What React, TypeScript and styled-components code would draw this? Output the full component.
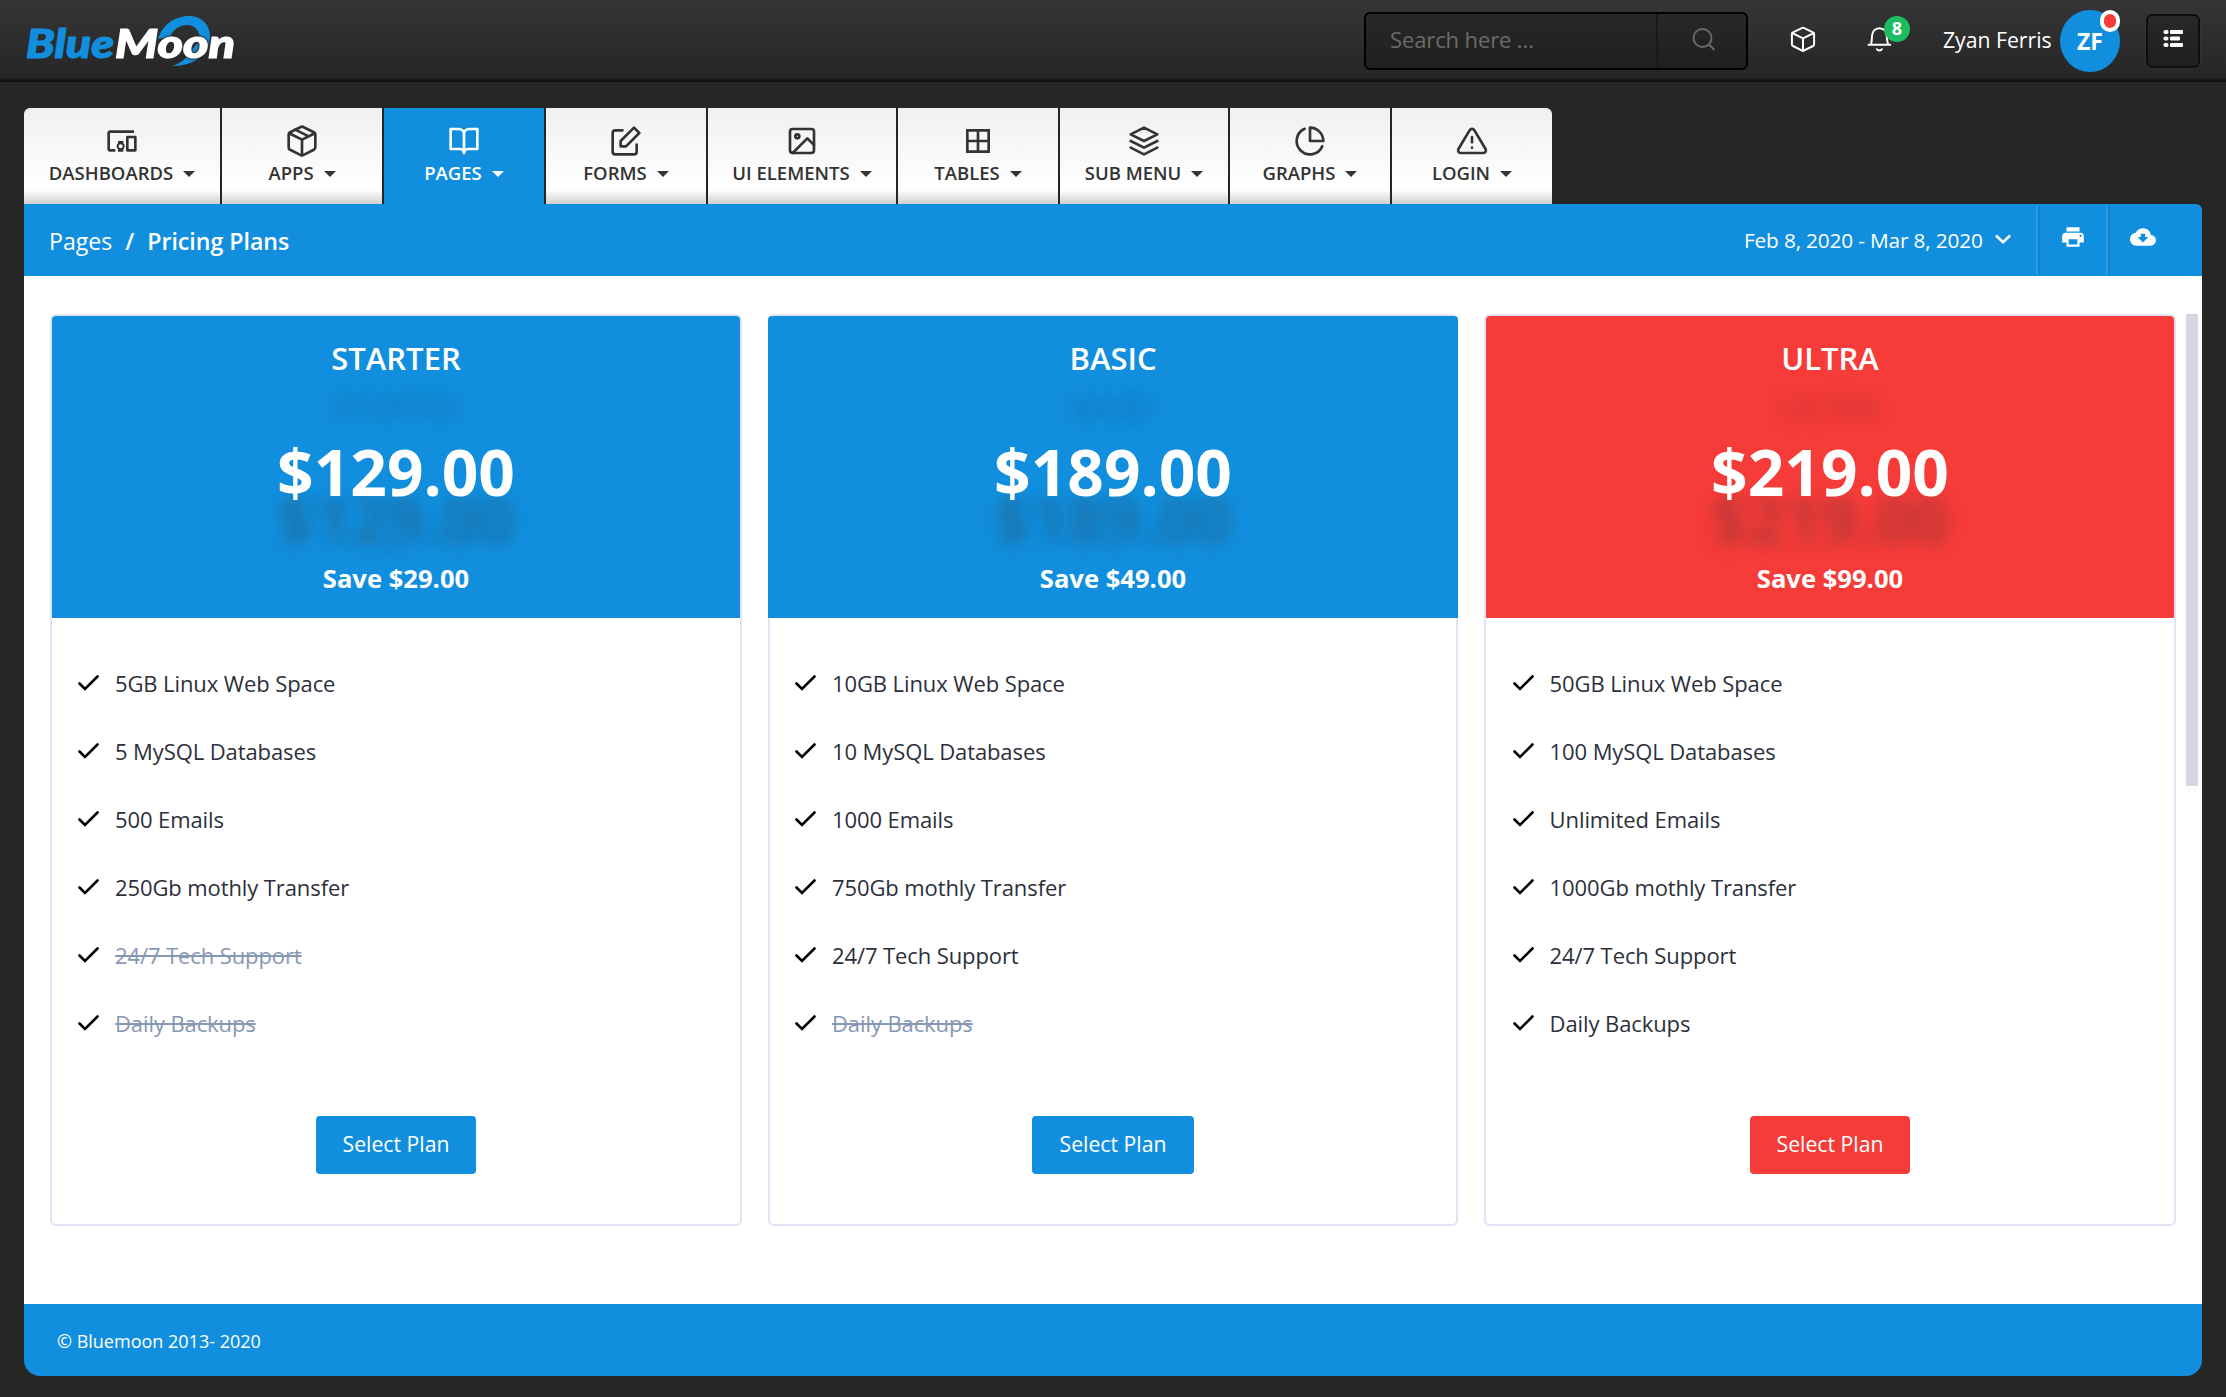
import React from "react";
import styled, { createGlobalStyle } from "styled-components";

const BLUE = "#118fde";
const RED = "#f63c39";
const DARK = "#262624";
const INK = "#333333";

const GlobalStyle = createGlobalStyle`
  *, *::before, *::after { box-sizing: border-box; }
  body {
    margin: 0;
    background: ${DARK};
    font-family: "Open Sans", "Noto Sans", sans-serif;
    -webkit-font-smoothing: antialiased;
  }
`;

const Page = styled.div`
  display: flex;
  flex-direction: column;
  height: 1397px;
  background: ${DARK};
`;

const Header = styled.header`
  display: flex;
  align-items: flex-start;
  justify-content: space-between;
  height: 82px;
  padding: 0 26px 0 24px;
  background: linear-gradient(#353535, #262626 78px, #131311 80px, #0e0e0c);
`;

const LogoArt = styled.svg`
  display: block;
  width: 216px;
  height: 80px;
`;

const LogoText = styled.text`
  font-family: Lato, "Open Sans", sans-serif;
  font-weight: 900;
  font-style: italic;
  font-size: 40px;
  stroke: currentColor;
  stroke-width: 1.2px;
  fill: currentColor;
`;

const LogoHalo = styled.g`
  filter: drop-shadow(0 0 0.8px #2b2b2b) drop-shadow(0 0 0.8px #2b2b2b);
`;

const HeaderTools = styled.div`
  display: flex;
  align-items: flex-start;
`;

const SearchBox = styled.div`
  display: flex;
  width: 384px;
  height: 58px;
  margin-top: 12px;
  border: 2px solid #000;
  border-radius: 6px;
  background: linear-gradient(#282826, #1f1f1f);
`;

const SearchField = styled.div`
  flex: 1;
  padding-left: 24px;
  border-right: 2px solid #1a1a19;
  font-size: 22px;
  line-height: 51px;
  letter-spacing: -0.12px;
  color: #6b6b6b;
`;

const SearchButton = styled.div`
  display: flex;
  align-items: center;
  justify-content: center;
  width: 88px;
  padding: 0 0 2px 3px;
`;

const HeaderIcon = styled.div<{ $left: number }>`
  position: relative;
  width: 28px;
  height: 28px;
  margin: 25px 0 0 ${(p) => p.$left}px;
  svg { display: block; }
`;

const CountBadge = styled.span`
  position: absolute;
  top: -9px;
  left: 19px;
  width: 26px;
  height: 26px;
  border-radius: 50%;
  background: #1bbd60;
  color: #fff;
  font-size: 18px;
  font-weight: 700;
  line-height: 24px;
  text-align: center;
`;

const UserName = styled.span`
  margin: 24px 0 0 50px;
  width: 109px;
  font-size: 21.2px;
  line-height: 32px;
  white-space: nowrap;
  color: #fff;
`;

const Avatar = styled.div`
  position: relative;
  width: 60px;
  height: 62px;
  margin: 10px 0 0 8px;
  border-radius: 50%;
  background: ${BLUE};
  color: #fff;
  font-size: 23px;
  font-weight: 700;
  line-height: 63px;
  text-align: center;
`;

const StatusDot = styled.span`
  position: absolute;
  top: 0;
  right: 0;
  width: 20px;
  height: 22px;
  border: 4px solid #fff;
  border-radius: 10px;
  background: ${RED};
`;

const MenuButton = styled.div`
  display: flex;
  justify-content: center;
  width: 54px;
  height: 54px;
  margin: 14px 0 0 26px;
  padding-top: 13px;
  border: 2px solid #0e0e0e;
  border-radius: 6px;
  background: linear-gradient(#282826, #1f1f1f);
  box-shadow: 0 0 2px #484848;
`;

const Tabs = styled.nav`
  display: flex;
  gap: 2px;
  align-self: flex-start;
  height: 96px;
  margin: 26px 0 0 24px;
  border-radius: 6px 6px 0 0;
  overflow: hidden;
`;

const Tab = styled.div<{ $width: number; $active?: boolean }>`
  display: flex;
  flex-direction: column;
  align-items: center;
  width: ${(p) => p.$width}px;
  padding-top: 17px;
  color: ${(p) => (p.$active ? "#fff" : INK)};
  background: ${(p) =>
    p.$active
      ? BLUE
      : "linear-gradient(rgba(0,0,0,0), rgba(0,0,0,0.19)) bottom / 100% 14px no-repeat, linear-gradient(#f0f0f0, #ffffff 78px)"};
`;

const TabLabel = styled.span`
  display: flex;
  align-items: center;
  gap: 10px;
  height: 30px;
  font-size: 18.5px;
  font-weight: 600;
  white-space: nowrap;
`;

const Caret = styled.i`
  margin-top: 4px;
  border: 6px solid transparent;
  border-bottom: 0;
  border-top-color: currentColor;
`;

const Toolbar = styled.div`
  display: flex;
  justify-content: space-between;
  height: 72px;
  margin: 0 24px;
  padding-left: 25px;
  border-radius: 0 6px 0 0;
  background: ${BLUE};
  color: #fff;
`;

const Breadcrumb = styled.div`
  display: flex;
  gap: 13px;
  font-size: 23.1px;
  line-height: 75px;
  b { font-weight: 600; }
`;

const ToolbarActions = styled.div`
  display: flex;
  align-items: stretch;
  padding: 2px 0;
`;

const DateRange = styled.div`
  display: flex;
  align-items: center;
  gap: 12px;
  width: 292px;
  padding-bottom: 1px;
  font-size: 20.8px;
  letter-spacing: -0.16px;
  white-space: nowrap;
`;

const ToolbarButton = styled.div<{ $width: number; $shift: number }>`
  display: flex;
  align-items: center;
  justify-content: center;
  width: ${(p) => p.$width}px;
  padding: 0 ${(p) => p.$shift}px 6px 2px;
  border-left: 2px solid #2c9ce5;
  box-shadow: inset 2px 0 #0f80c9;
`;

const Content = styled.main`
  display: flex;
  align-items: flex-start;
  height: 1028px;
  margin: 0 24px;
  padding: 38px 4px 0 26px;
  background: #fff;
`;

const Plans = styled.div`
  display: grid;
  grid-template-columns: 692px 690px 692px;
  gap: 26px;
  flex: 1;
`;

const ScrollThumb = styled.div`
  width: 12px;
  height: 472px;
  margin-left: 10px;
  background: #d4d7e0;
`;

const Card = styled.section`
  display: flex;
  flex-direction: column;
  height: 912px;
  border: 2px solid #e2e2f4;
  border-radius: 6px;
  background: #fff;
`;

const CardHead = styled.div<{ $color: string; $bleed: number }>`
  height: 302px;
  margin: 0 -${(p) => p.$bleed}px;
  padding-top: 19px;
  border-radius: 4px 4px 0 0;
  background: ${(p) => p.$color};
  color: #fff;
  text-align: center;
`;

const PlanName = styled.div`
  font-size: 31px;
  font-weight: 600;
  line-height: 46px;
  text-shadow: 0 49px 16px rgba(50, 50, 50, 0.22);
`;

const Price = styled.div`
  margin-top: 46px;
  font-size: 64px;
  font-weight: 700;
  line-height: 90px;
  text-shadow: 0 48px 16px rgba(50, 50, 50, 0.3);
`;

const Saving = styled.div`
  margin-top: 43px;
  font-size: 25.6px;
  font-weight: 700;
  line-height: 38px;
`;

const Features = styled.ul<{ $indent: number }>`
  display: flex;
  flex-direction: column;
  margin: 32px 0 0;
  padding: 0 0 0 ${(p) => p.$indent}px;
  list-style: none;
`;

const Feature = styled.li`
  display: flex;
  align-items: center;
  gap: 16px;
  height: 68px;
  padding-bottom: 2px;
  font-size: 22px;
  letter-spacing: -0.1px;
`;

const FeatureText = styled.span<{ $off: boolean }>`
  color: ${(p) => (p.$off ? "#8798b4" : "#2c303b")};
  text-decoration: ${(p) => (p.$off ? "line-through 2px" : "none")};
`;

const SelectButton = styled.button<{ $color: string; $width: number }>`
  align-self: center;
  width: ${(p) => p.$width}px;
  height: 58px;
  margin-top: 58px;
  padding: 0 0 3px;
  border: 0;
  border-radius: 4px;
  background: ${(p) => p.$color};
  color: #fff;
  font-family: inherit;
  font-size: 21.2px;
`;

const Footer = styled.footer`
  height: 72px;
  margin: 0 24px;
  padding-left: 33px;
  border-radius: 0 0 16px 16px;
  background: ${BLUE};
  color: #fff;
  font-size: 18px;
  line-height: 74px;
`;

const Line = ({ children }: { children: React.ReactNode }) => (
  <svg width="32" height="32" viewBox="0 0 24 24" fill="none" stroke="currentColor" strokeWidth="2" strokeLinecap="round" strokeLinejoin="round">
    {children}
  </svg>
);

const Solid = ({ d, size = 32 }: { d: string; size?: number }) => (
  <svg width={size} height={size} viewBox="0 0 24 24" fill="currentColor">
    <path d={d} />
  </svg>
);

const tabs: { label: string; width: number; active?: boolean; icon: React.ReactNode }[] = [
  {
    label: "DASHBOARDS",
    width: 196,
    icon: (
      <Solid d="M3 6h18V4H3c-1.1 0-2 .9-2 2v12c0 1.1.9 2 2 2h4v-2H3V6zm10 6H9v1.78c-.61.55-1 1.33-1 2.22s.39 1.67 1 2.22V20h4v-1.78c.61-.55 1-1.34 1-2.22s-.39-1.67-1-2.22V12zm-2 5.5c-.83 0-1.5-.67-1.5-1.5s.67-1.5 1.5-1.5 1.5.67 1.5 1.5-.67 1.5-1.5 1.5zM22 8h-6c-.5 0-1 .5-1 1v10c0 .5.5 1 1 1h6c.5 0 1-.5 1-1V9c0-.5-.5-1-1-1zm-1 10h-4v-8h4v8z" />
    ),
  },
  {
    label: "APPS",
    width: 160,
    icon: (
      <Line>
        <path d="M12.89 1.45l8 4A2 2 0 0 1 22 7.24v9.53a2 2 0 0 1-1.11 1.79l-8 4a2 2 0 0 1-1.79 0l-8-4a2 2 0 0 1-1.1-1.8V7.24a2 2 0 0 1 1.11-1.79l8-4a2 2 0 0 1 1.78 0z" />
        <path d="M2.32 6.16L12 11l9.68-4.84M12 22.76V11M7 3.5l10 5" />
      </Line>
    ),
  },
  {
    label: "PAGES",
    width: 160,
    active: true,
    icon: <Line><path d="M2 3h6a4 4 0 0 1 4 4v14a3 3 0 0 0-3-3H2zM22 3h-6a4 4 0 0 0-4 4v14a3 3 0 0 1 3-3h7z" /></Line>,
  },
  {
    label: "FORMS",
    width: 160,
    icon: <Line><path d="M20 14.66V20a2 2 0 0 1-2 2H4a2 2 0 0 1-2-2V6a2 2 0 0 1 2-2h5.34" /><path d="M18 2l4 4-10 10H8v-4L18 2z" /></Line>,
  },
  {
    label: "UI ELEMENTS",
    width: 188,
    icon: <Line><rect x="3" y="3" width="18" height="18" rx="2" /><circle cx="8.5" cy="8.5" r="1.5" /><path d="M21 15l-5-5L5 21" /></Line>,
  },
  { label: "TABLES", width: 160, icon: <Solid d="M3 3v18h18V3H3zm8 16H5v-6h6v6zm0-8H5V5h6v6zm8 8h-6v-6h6v6zm0-8h-6V5h6v6z" /> },
  { label: "SUB MENU", width: 168, icon: <Line><path d="M12 2L2 7l10 5 10-5-10-5zM2 17l10 5 10-5M2 12l10 5 10-5" /></Line> },
  { label: "GRAPHS", width: 160, icon: <Line><path d="M21.21 15.89A10 10 0 1 1 8 2.83" /><path d="M22 12A10 10 0 0 0 12 2v10z" /></Line> },
  {
    label: "LOGIN",
    width: 160,
    icon: <Line><path d="M10.29 3.86L1.82 18a2 2 0 0 0 1.71 3h16.94a2 2 0 0 0 1.71-3L13.71 3.86a2 2 0 0 0-3.42 0zM12 9v4M12 17h.01" /></Line>,
  },
];

const plans = [
  {
    name: "STARTER", price: "$129.00", save: "Save $29.00", color: BLUE, off: 2, bleed: 0, indent: 26, button: 160,
    features: ["5GB Linux Web Space", "5 MySQL Databases", "500 Emails", "250Gb mothly Transfer", "24/7 Tech Support", "Daily Backups"],
  },
  {
    name: "BASIC", price: "$189.00", save: "Save $49.00", color: BLUE, off: 1, bleed: 2, indent: 25, button: 162,
    features: ["10GB Linux Web Space", "10 MySQL Databases", "1000 Emails", "750Gb mothly Transfer", "24/7 Tech Support", "Daily Backups"],
  },
  {
    name: "ULTRA", price: "$219.00", save: "Save $99.00", color: RED, off: 0, bleed: 0, indent: 26.6, button: 160,
    features: ["50GB Linux Web Space", "100 MySQL Databases", "Unlimited Emails", "1000Gb mothly Transfer", "24/7 Tech Support", "Daily Backups"],
  },
];

const Logo = () => (
  <LogoArt viewBox="24 0 216 80">
    <path
      fill={BLUE}
      d="M158 39C162 25 175 16 189 16C202 16 210 25 210 37C210 52 197 66 173 66C182 62 187 58 190 52L200 40C200 31 195 25 187 25C180 25 173 29 170 37Z"
    />
    <LogoText x="26" y="57.5" color={BLUE} textLength="88" lengthAdjust="spacingAndGlyphs">Blue</LogoText>
    <LogoHalo>
      <LogoText x="115" y="57.5" color="#fff" textLength="120" lengthAdjust="spacingAndGlyphs">Moon</LogoText>
    </LogoHalo>
  </LogoArt>
);

export default function App() {
  return (
    <Page>
      <GlobalStyle />
      <Header>
        <Logo />
        <HeaderTools>
          <SearchBox>
            <SearchField>Search here ...</SearchField>
            <SearchButton>
              <svg width="24" height="24" viewBox="0 0 24 24" fill="none" stroke="#6b6b6b" strokeWidth="1.9">
                <circle cx="10.5" cy="10" r="9" />
                <path d="M17 16.5l5.5 5.5" />
              </svg>
            </SearchButton>
          </SearchBox>
          <HeaderIcon $left={41}>
            <svg width="28" height="28" viewBox="0 0 24 24" fill="none" stroke="#fff" strokeWidth="1.7" strokeLinecap="round" strokeLinejoin="round">
              <path d="M12.6 2.4l8 4A1.5 1.5 0 0 1 21.5 7.7v9a1.5 1.5 0 0 1-.9 1.3l-7.9 4a1.5 1.5 0 0 1-1.4 0l-7.9-4a1.5 1.5 0 0 1-.9-1.3v-9a1.5 1.5 0 0 1 .9-1.3l8-4a1.5 1.5 0 0 1 1.2 0z" />
              <path d="M2.8 6.9L12 11.5l9.2-4.6M12 22V11.5" />
            </svg>
          </HeaderIcon>
          <HeaderIcon $left={48}>
            <svg width="28" height="28" viewBox="0 0 28 28" fill="none" stroke="#fff" strokeWidth="2" strokeLinecap="round">
              <path d="M3.5 19.7H25.3M6 19C7 16.5 6.8 14 7 11C7.3 6.5 10 3.2 14.4 3.2C18.8 3.2 21.5 6.5 21.8 11C22 14 22 16.5 23 19" />
              <path d="M12 24.2C12.8 25.8 16 25.8 16.8 24.2" />
            </svg>
            <CountBadge>8</CountBadge>
          </HeaderIcon>
          <UserName>Zyan Ferris</UserName>
          <Avatar>
            ZF
            <StatusDot />
          </Avatar>
          <MenuButton>
            <svg width="20" height="19" viewBox="0 0 20 19" fill="#fff">
              <rect x="0.5" y="1" width="5" height="4" rx="1.8" />
              <rect x="0.5" y="7.5" width="5" height="4" rx="1.8" />
              <rect x="0.5" y="14" width="5" height="4" rx="1.8" />
              <rect x="7" y="1" width="13" height="4" rx="1" />
              <rect x="7" y="7.5" width="10" height="4" rx="1" />
              <rect x="7" y="14" width="13" height="4" rx="1" />
            </svg>
          </MenuButton>
        </HeaderTools>
      </Header>
      <Tabs>
        {tabs.map((t) => (
          <Tab key={t.label} $width={t.width} $active={t.active}>
            {t.icon}
            <TabLabel>
              {t.label}
              <Caret />
            </TabLabel>
          </Tab>
        ))}
      </Tabs>
      <Toolbar>
        <Breadcrumb>
          <span>Pages</span>
          <b>/</b>
          <b>Pricing Plans</b>
        </Breadcrumb>
        <ToolbarActions>
          <DateRange>
            Feb 8, 2020 - Mar 8, 2020
            <svg width="16" height="11" viewBox="0 0 16 11" fill="none" stroke="#fff" strokeWidth="2.6">
              <path d="M1 1.5l7 6.7 7-6.7" />
            </svg>
          </DateRange>
          <ToolbarButton $width={70} $shift={0}>
            <Solid size={26} d="M19 8H5c-1.66 0-3 1.34-3 3v6h4v4h12v-4h4v-6c0-1.66-1.34-3-3-3zm-3 11H8v-5h8v5zm3-7c-.55 0-1-.45-1-1s.45-1 1-1 1 .45 1 1-.45 1-1 1zm-1-9H6v4h12V3z" />
          </ToolbarButton>
          <ToolbarButton $width={96} $shift={27}>
            <Solid size={26} d="M19.35 10.04C18.67 6.59 15.64 4 12 4 9.11 4 6.6 5.64 5.35 8.04 2.34 8.36 0 10.91 0 14c0 3.31 2.69 6 6 6h13c2.76 0 5-2.24 5-5 0-2.64-2.05-4.78-4.65-4.96zM17 12l-5 5-5-5h3V9h4v3h3z" />
          </ToolbarButton>
        </ToolbarActions>
      </Toolbar>
      <Content>
        <Plans>
          {plans.map((p) => (
            <Card key={p.name}>
              <CardHead $color={p.color} $bleed={p.bleed}>
                <PlanName>{p.name}</PlanName>
                <Price>{p.price}</Price>
                <Saving>{p.save}</Saving>
              </CardHead>
              <Features $indent={p.indent}>
                {p.features.map((f, i) => (
                  <Feature key={f}>
                    <svg width="21" height="16" viewBox="0 0 21 16" fill="none" stroke="#000" strokeWidth="2.6" strokeLinecap="round">
                      <path d="M1.5 8.5L7 14L19.5 1.5" />
                    </svg>
                    <FeatureText $off={i >= p.features.length - p.off}>{f}</FeatureText>
                  </Feature>
                ))}
              </Features>
              <SelectButton $color={p.color} $width={p.button}>Select Plan</SelectButton>
            </Card>
          ))}
        </Plans>
        <ScrollThumb />
      </Content>
      <Footer>© Bluemoon 2013- 2020</Footer>
    </Page>
  );
}
